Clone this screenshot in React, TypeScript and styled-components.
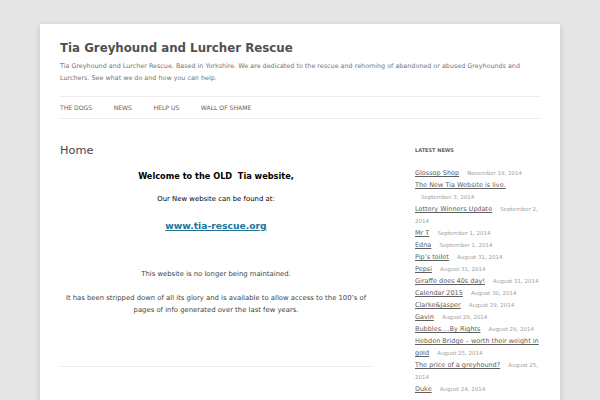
import styled, { createGlobalStyle } from "styled-components";

const GlobalStyle = createGlobalStyle`
  html, body {
    margin: 0;
    padding: 0;
    background: #e6e6e6;
  }
  body {
    font-family: "DejaVu Sans", "Open Sans", sans-serif;
    color: #444;
  }
`;

interface NewsItem {
  title: string;
  date: string;
}

const news: NewsItem[] = [
  { title: "Glossop Shop", date: "November 19, 2014" },
  { title: "The New Tia Website is live.", date: "September 3, 2014" },
  { title: "Lottery Winners Update", date: "September 2, 2014" },
  { title: "Mr T", date: "September 1, 2014" },
  { title: "Edna", date: "September 1, 2014" },
  { title: "Pip’s toilet", date: "August 31, 2014" },
  { title: "Pepsi", date: "August 31, 2014" },
  { title: "Giraffe does 40s day!", date: "August 31, 2014" },
  { title: "Calendar 2015", date: "August 30, 2014" },
  { title: "Clarke&Jasper", date: "August 29, 2014" },
  { title: "Gavin", date: "August 29, 2014" },
  { title: "Bubbles….By Rights", date: "August 29, 2014" },
  { title: "Hebden Bridge – worth their weight in gold", date: "August 25, 2014" },
  { title: "The price of a greyhound?", date: "August 25, 2014" },
  { title: "Duke", date: "August 24, 2014" },
];

const navItems = ["The Dogs", "News", "Help Us", "Wall of Shame"];

const Page = styled.div`
  margin: 24px 40px 0;
  background: #fff;
  padding: 0 20px;
  min-height: 376px;
  box-shadow: 0 2px 6px rgba(100, 100, 100, 0.3);
  overflow: hidden;
`;

const Masthead = styled.header`
  padding-top: 16px;
`;

const SiteTitle = styled.h1`
  margin: 0;
  font-size: 11.8px;
  line-height: 16px;
  font-weight: 700;
  color: #515151;
`;

const Tagline = styled.p`
  margin: 4px 0 0;
  font-size: 6.4px;
  line-height: 12px;
  color: #757575;
`;

const Nav = styled.nav`
  margin-top: 12px;
  border-top: 1px solid #ededed;
  border-bottom: 1px solid #ededed;
  height: 21px;
  display: flex;
  align-items: center;
  gap: 21.5px;
`;

const NavLink = styled.a`
  font-size: 6.1px;
  text-transform: uppercase;
  color: #666;
  text-decoration: none;
`;

const Main = styled.div`
  display: grid;
  grid-template-columns: 312px 1fr;
  gap: 43px;
  padding-top: 25px;
`;

const Article = styled.article``;

const EntryTitle = styled.h2`
  margin: 0;
  font-size: 11.3px;
  line-height: 14px;
  font-weight: 400;
  color: #444;
`;

const EntryContent = styled.div`
  text-align: center;
  padding-bottom: 50px;
  border-bottom: 1px solid #ededed;
`;

const Para = styled.p<{ $gap?: number; $strong?: boolean; $bold?: boolean; $size?: number }>`
  margin: ${(p) => p.$gap ?? 12}px 0 0;
  font-weight: ${(p) => (p.$bold ? 700 : 400)};
  font-size: ${(p) => p.$size ?? 6.85}px;
  line-height: 12px;
  color: ${(p) => (p.$strong ? "#000" : "#444")};
`;

const SiteLink = styled.a`
  font-weight: 700;
  font-size: 9.2px;
  color: #21759b;
  text-decoration: underline;
`;

const Sidebar = styled.aside``;

const WidgetTitle = styled.h3`
  margin: 0 0 11px;
  font-size: 5px;
  line-height: 12px;
  font-weight: 700;
  text-transform: uppercase;
  color: #636363;
`;

const NewsList = styled.ul`
  list-style: none;
  margin: 0;
  padding: 0;
`;

const NewsRow = styled.li`
  font-size: 6.5px;
  line-height: 12px;
`;

const NewsLink = styled.a`
  color: #5e5e5e;
  text-decoration: underline;
`;

const PostDate = styled.span`
  margin-left: 6px;
  font-size: 5.5px;
  color: #a0a0a0;
`;

export default function App() {
  return (
    <>
      <GlobalStyle />
      <Page>
        <Masthead>
          <SiteTitle>Tia Greyhound and Lurcher Rescue</SiteTitle>
          <Tagline>
            Tia Greyhound and Lurcher Rescue. Based in Yorkshire. We are dedicated to the rescue and
            rehoming of abandoned or abused Greyhounds and Lurchers. See what we do and how you can
            help.
          </Tagline>
          <Nav>
            {navItems.map((item) => (
              <NavLink key={item}>{item}</NavLink>
            ))}
          </Nav>
        </Masthead>
        <Main>
          <Article>
            <EntryTitle>Home</EntryTitle>
            <EntryContent>
              <Para $gap={12} $strong $bold $size={8.2}>
                Welcome to the OLD&nbsp; Tia website,
              </Para>
              <Para $gap={11} $strong $size={6.9}>
                Our New website can be found at:
              </Para>
              <Para $gap={15}>
                <SiteLink>www.tia-rescue.org</SiteLink>
              </Para>
              <Para $gap={35}>This website is no longer being maintained.</Para>
              <Para $gap={12}>
                It has been stripped down of all its glory and is available to allow access to the
                100’s of pages of info generated over the last few years.
              </Para>
            </EntryContent>
          </Article>
          <Sidebar>
            <WidgetTitle>Latest News</WidgetTitle>
            <NewsList>
              {news.map((n) => (
                <NewsRow key={n.title}>
                  <NewsLink>{n.title}</NewsLink> <PostDate>{n.date}</PostDate>
                </NewsRow>
              ))}
            </NewsList>
          </Sidebar>
        </Main>
      </Page>
    </>
  );
}
